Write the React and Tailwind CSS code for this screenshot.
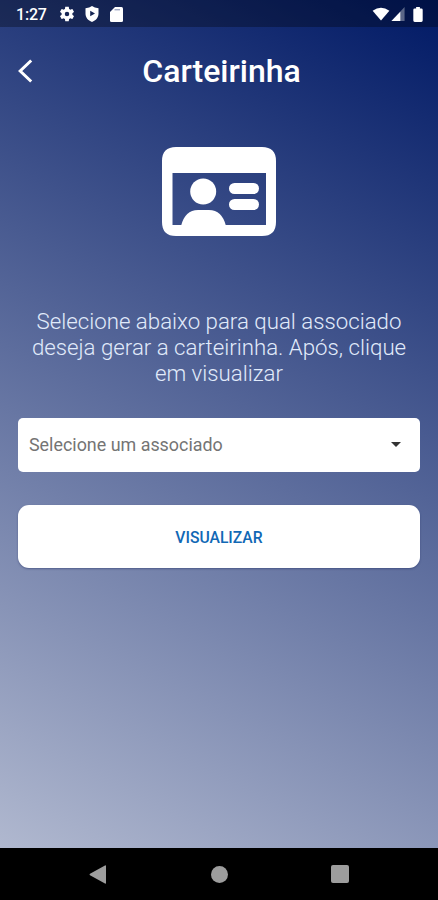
const Glyph = ({ className, box = "0 0 24 24", children }) => (
  <svg className={className} viewBox={box} fill="currentColor" aria-hidden="true">{children}</svg>
);

function StatusBar() {
  return (
    <div className="flex h-[27px] shrink-0 items-center bg-black/30 pt-px pl-[16px] pr-[15px] text-white">
      <span className="w-[42px] pt-px text-[16px] leading-none font-medium tracking-[-0.2px]">1:27</span>
      <Glyph className="size-[18px]">
        <path fillRule="evenodd" d="M19.14 12.94c.04-.3.06-.61.06-.94s-.02-.64-.07-.94l2.03-1.58c.18-.14.23-.41.12-.61l-1.92-3.32c-.12-.22-.37-.29-.59-.22l-2.39.96c-.5-.38-1.03-.7-1.62-.94l-.36-2.54c-.04-.24-.24-.41-.48-.41h-3.84c-.24 0-.43.17-.47.41l-.36 2.54c-.59.24-1.13.57-1.62.94l-2.39-.96c-.22-.08-.47 0-.59.22L2.74 8.87c-.12.21-.08.47.12.61l2.03 1.58c-.05.3-.09.63-.09.94s.02.64.07.94l-2.03 1.58c-.18.14-.23.41-.12.61l1.92 3.32c.12.22.37.29.59.22l2.39-.96c.5.38 1.03.7 1.62.94l.36 2.54c.05.24.24.41.48.41h3.84c.24 0 .44-.17.47-.41l.36-2.54c.59-.24 1.13-.56 1.62-.94l2.39.96c.22.08.47 0 .59-.22l1.92-3.32c.12-.22.07-.47-.12-.61zM12 15A3 3 0 1 1 12 9a3 3 0 0 1 0 6z" />
      </Glyph>
      <Glyph className="ml-[8px] h-[16px] w-[16px]" box="0 0 16 16">
        <path fillRule="evenodd" d="M8 0Q10.500 2 14.500 2.300V7.500C14.500 11.500 12 14.500 8 16 4 14.500 1.500 11.500 1.500 7.500V2.300Q5.500 2 8 0zM6.200 4.700v5.600l4.800-2.800z" />
      </Glyph>
      <Glyph className="ml-[10px] h-[15px] w-[13px]" box="0 0 13 15">
        <path d="M5 0h6.500Q13 0 13 1.500v12Q13 15 11.500 15h-10Q0 15 0 13.500V5z" />
        <path d="M4.500 2.800h5.500" stroke="#7d88ad" strokeWidth="1" />
      </Glyph>
      <Glyph className="ml-auto h-[14px] w-[18px]" box="0 0 19 15">
        <path d="M0.500 4Q9.500-2.500 18.500 4L9.500 14.500z" />
      </Glyph>
      <Glyph className="ml-[1px] h-[14px] w-[14px]" box="0 0 14 15">
        <path d="M14 0v15H0z" opacity=".35" />
        <path d="M9.500 5v10H0z" />
      </Glyph>
      <Glyph className="ml-[8px] h-[15px] w-[10px]" box="0 0 10 16">
        <path d="M3 0h4v1.500h1.500Q10 1.500 10 3v11.500q0 1.500-1.500 1.500h-7Q0 16 0 14.500V3Q0 1.500 1.500 1.500H3z" />
      </Glyph>
    </div>
  );
}

function Header() {
  return (
    <header className="grid h-[89px] shrink-0 grid-cols-[40px_1fr_40px] items-center text-white">
      <button aria-label="Voltar" className="flex pb-px pl-[18px]">
        <svg className="h-[24px] w-[16px]" viewBox="0 0 16 24" fill="none" stroke="currentColor" strokeWidth="3" aria-hidden="true">
          <path d="M13.200 1.500 2.200 12l11 10.500" />
        </svg>
      </button>
      <h1 className="pb-px pl-[5px] text-center text-[32px] leading-none font-medium">Carteirinha</h1>
    </header>
  );
}

function CardIcon() {
  return (
    <Glyph className="mx-auto h-[89px] w-[114px] text-white" box="0 0 114 89">
      <path fillRule="evenodd" d="M14 0h86q14 0 14 14v61q0 14-14 14H14Q0 89 0 75V14Q0 0 14 0zM10.500 26v52H104V26z" />
      <circle cx="41.200" cy="44.500" r="13" />
      <path d="M19 79Q23 63 36 63h11q13 0 17 16z" />
      <rect x="67" y="36" width="30" height="11" rx="5.500" />
      <rect x="67" y="52" width="30" height="11" rx="5.500" />
    </Glyph>
  );
}

export default function App() {
  return (
    <div className="flex h-[900px] w-[438px] flex-col overflow-hidden bg-black font-['Roboto','Liberation_Sans',sans-serif]">
      <div className="flex h-[848px] shrink-0 flex-col bg-[linear-gradient(207deg,#001965_0%,#b0b8cf_100%)]">
        <StatusBar />
        <Header />
        <main className="flex flex-col px-[18px] pt-[31px]">
          <CardIcon />
          <p className="mt-[73px] text-center text-[22.250px] leading-[25.800px] font-light whitespace-nowrap text-[#e1ebfb]">
            Selecione abaixo para qual associado<br />deseja gerar a carteirinha. Após, clique<br />em visualizar
          </p>
          <button className="mt-[31.600px] flex h-[54px] items-center justify-between rounded-[5px] bg-white pr-[19px] pl-[11px] text-[17.900px] text-[#747474]">
            <span className="pt-px">Selecione um associado</span>
            <Glyph className="h-[5px] w-[10px] text-[#333]" box="0 0 10 5"><path d="M0 0h10L5 5z" /></Glyph>
          </button>
          <button className="mt-[33px] h-[63px] rounded-[11px] bg-white pt-[2px] text-[15.700px] font-medium text-[#1168b5] shadow-[0_1px_2px_#26346780]">
            VISUALIZAR
          </button>
        </main>
      </div>
      <nav className="flex h-[52px] items-center justify-between px-[89px] text-[#9d9d9d]">
        <Glyph className="h-[19px] w-[18px]" box="0 0 18 19"><path d="M16 .500Q17 0 17 1v17q0 1-1 .500L1 10.300q-1-.8 0-1.600z" /></Glyph>
        <span className="size-[17px] rounded-full bg-current" />
        <span className="size-[18px] rounded-[2px] bg-current" />
      </nav>
    </div>
  );
}
